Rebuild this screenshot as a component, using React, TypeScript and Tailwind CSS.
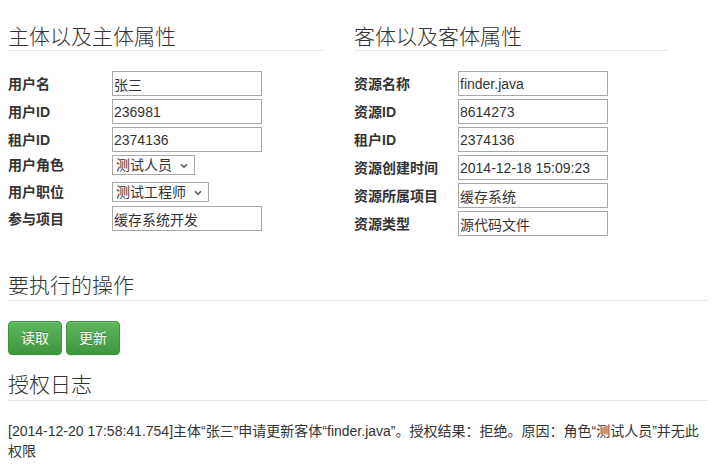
import React from "react";

const font = { fontFamily: '"Liberation Sans", "Noto Sans CJK SC", sans-serif' };

function TextInput({ value }: { value: string }) {
  return (
    <input
      readOnly
      value={value}
      className="w-[150px] h-[25px] border border-[#a9a9a9] px-[1px] text-[14px] text-[#333] outline-none bg-white"
      style={font}
    />
  );
}

function Select({ value, width }: { value: string; width: string }) {
  return (
    <div className={`relative h-[20px] ${width} border border-[#a9a9a9] bg-white flex items-center`}>
      <span className="pl-[3px] text-[14px] leading-[18px] text-[#333]">{value}</span>
      <svg className="absolute right-[6px] top-[7px]" width="8" height="6" viewBox="0 0 8 6">
        <path d="M1 1.2 L4 4.2 L7 1.2" fill="none" stroke="#555" strokeWidth="1.6" />
      </svg>
    </div>
  );
}

function Row({ label, children, className = "" }: { label: string; children: React.ReactNode; className?: string }) {
  return (
    <div className={`flex items-center ${className}`}>
      <div className="w-[104px] text-[14px] font-bold text-[#333] leading-[20px]">{label}</div>
      {children}
    </div>
  );
}

function Btn({ text }: { text: string }) {
  return (
    <button
      className="h-[34px] w-[54px] rounded-[4px] border border-[#3e8f3e] text-white text-[14px] bg-gradient-to-b from-[#5cb85c] to-[#419641] shadow-[inset_0_1px_0_rgba(255,255,255,0.15),0_1px_1px_rgba(0,0,0,0.075)] [text-shadow:0_-1px_0_rgba(0,0,0,0.2)]"
      style={font}
    >
      {text}
    </button>
  );
}

export default function App() {
  return (
    <div className="w-[718px] h-[464px] bg-white text-[#333] overflow-hidden px-[8px]" style={font}>
      <div className="flex items-start gap-[31px] pt-[26px]">
        <div className="w-[315px]">
          <div className="text-[21px] leading-[21px] pb-[3px] border-b border-[#e6e6e6] font-light">主体以及主体属性</div>
          <div className="flex flex-col">
            <Row label="用户名" className="mt-[20px]"><TextInput value="张三" /></Row>
            <Row label="用户ID" className="mt-[3px]"><TextInput value="236981" /></Row>
            <Row label="租户ID" className="mt-[3px]"><TextInput value="2374136" /></Row>
            <Row label="用户角色" className="mt-[3px]"><Select value="测试人员" width="w-[83px]" /></Row>
            <Row label="用户职位" className="mt-[7px]"><Select value="测试工程师" width="w-[97px]" /></Row>
            <Row label="参与项目" className="mt-[4px]"><TextInput value="缓存系统开发" /></Row>
          </div>
        </div>
        <div className="w-[314px]">
          <div className="text-[21px] leading-[21px] pb-[3px] border-b border-[#e6e6e6] font-light">客体以及客体属性</div>
          <div className="flex flex-col gap-[3px] mt-[20px]">
            <Row label="资源名称"><TextInput value="finder.java" /></Row>
            <Row label="资源ID"><TextInput value="8614273" /></Row>
            <Row label="租户ID"><TextInput value="2374136" /></Row>
            <Row label="资源创建时间"><TextInput value="2014-12-18 15:09:23" /></Row>
            <Row label="资源所属项目"><TextInput value="缓存系统" /></Row>
            <Row label="资源类型"><TextInput value="源代码文件" /></Row>
          </div>
        </div>
      </div>

      <div className="w-[700px] mt-[39px] text-[21px] leading-[21px] pb-[4px] border-b border-[#e6e6e6] font-light">要执行的操作</div>
      <div className="flex gap-[4px] mt-[20px]">
        <Btn text="读取" />
        <Btn text="更新" />
      </div>

      <div className="w-[700px] mt-[19px] text-[21px] leading-[21px] pb-[5px] border-b border-[#e6e6e6] font-light">授权日志</div>
      <div className="w-[700px] mt-[20px] text-[14px] leading-[20px]">
        [2014-12-20 17:58:41.754]主体“张三”申请更新客体“finder.java”。授权结果：拒绝。原因：角色“测试人员”并无此权限
      </div>
    </div>
  );
}
